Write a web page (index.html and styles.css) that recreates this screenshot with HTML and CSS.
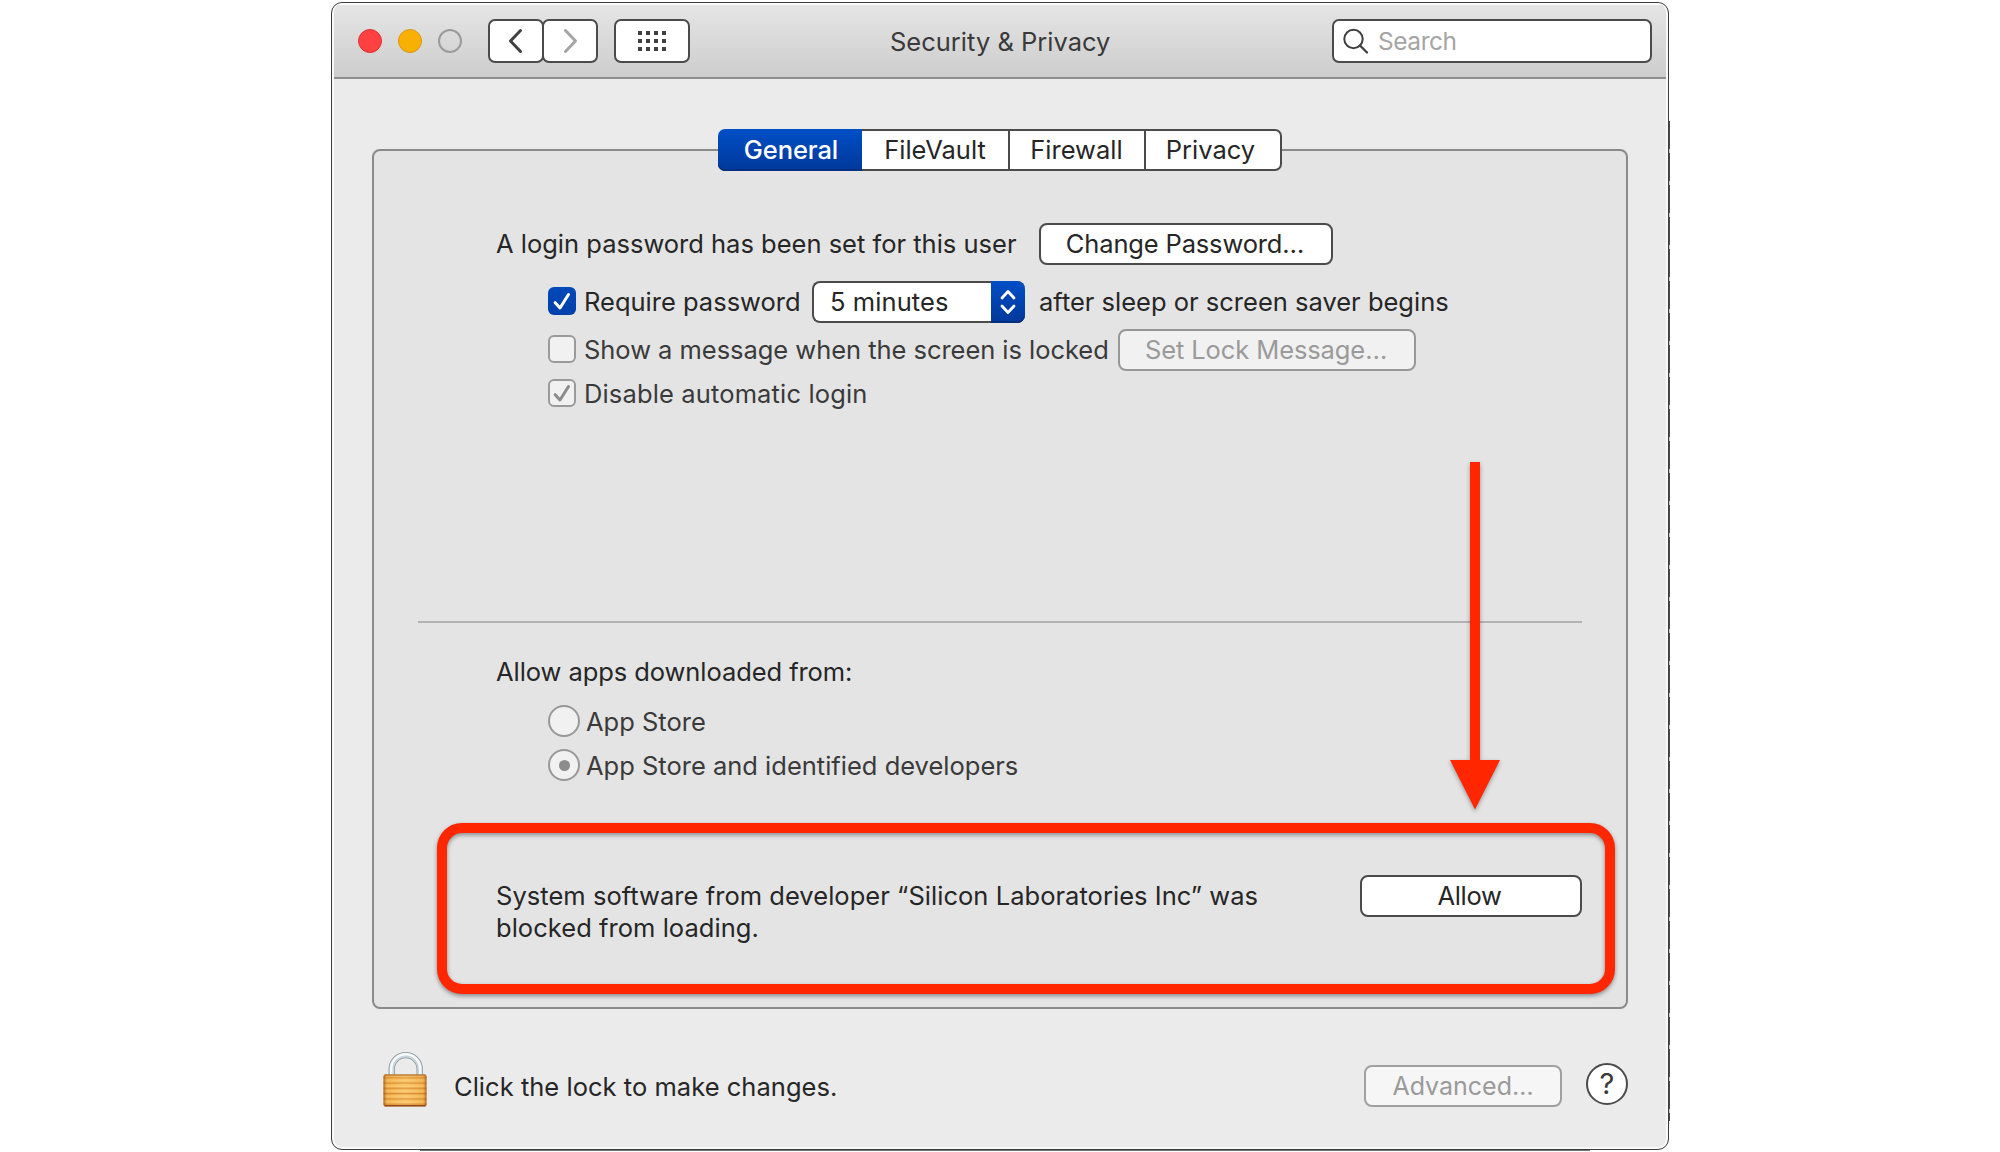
FILE: index.html
```html
<!DOCTYPE html>
<html lang="en">
<head>
<meta charset="utf-8">
<title>Security &amp; Privacy</title>
<link rel="stylesheet" href="styles.css">
</head>
<body>
<main class="window">
  <header class="titlebar">
    <div class="lights"><span class="light close"></span><span class="light minimize"></span><span class="light zoom"></span></div>
    <div class="nav">
      <button class="tool" aria-label="Back"><svg width="16" height="26" viewBox="0 0 16 26"><path d="M12.5 2.5 2.5 13l10 10.5" fill="none" stroke="#404040" stroke-width="3" stroke-linecap="round" stroke-linejoin="round"/></svg></button>
      <button class="tool" aria-label="Forward"><svg width="16" height="26" viewBox="0 0 16 26"><path d="M3.5 2.5 13.5 13l-10 10.5" fill="none" stroke="#a5a5a5" stroke-width="3" stroke-linecap="round" stroke-linejoin="round"/></svg></button>
    </div>
    <button class="tool all" aria-label="Show All"><svg width="28" height="20" viewBox="0 0 28 20"><path d="M0 2h28M0 10h28M0 18h28" fill="none" stroke="#404040" stroke-width="4" stroke-dasharray="4 4"/></svg></button>
    <h1 class="title">Security &amp; Privacy</h1>
    <div class="search">
      <svg width="28" height="28" viewBox="0 0 28 28"><circle cx="11.5" cy="11" r="9.2" fill="none" stroke="#404040" stroke-width="2"/><path d="m18 17.500 7 7" stroke="#404040" stroke-width="2.300" stroke-linecap="round"/></svg>
      <span>Search</span>
    </div>
  </header>

  <section class="panel">
    <nav class="tabs">
      <span class="tab selected">General</span><span class="tab vault">FileVault</span><span class="tab wall">Firewall</span><span class="tab privacy">Privacy</span>
    </nav>

    <div class="login">
      <div class="row">
        <span class="label password-set">A login password has been set for this user</span>
        <button class="button change">Change Password…</button>
      </div>
      <div class="row sub require">
        <span class="check on"><svg width="28" height="28" viewBox="0 0 28 28"><path d="m7.200 15.700 4.800 5.300L20.500 7.500" fill="none" stroke="#fff" stroke-width="3" stroke-linecap="round" stroke-linejoin="round"/></svg></span>
        <span class="label">Require password</span>
        <span class="select"><span class="value">5 minutes</span><span class="stepper"><svg width="18" height="26" viewBox="0 0 18 26"><path d="m3 9 6-6.500L15 9M3 17l6 6.500L15 17" fill="none" stroke="#fff" stroke-width="2.800" stroke-linecap="round" stroke-linejoin="round"/></svg></span></span>
        <span class="after">after sleep or screen saver begins</span>
      </div>
      <div class="row sub message dim">
        <span class="check"></span>
        <span class="label">Show a message when the screen is locked</span>
        <button class="button lock-message off">Set Lock Message…</button>
      </div>
      <div class="row sub auto dim">
        <span class="check"><svg width="24" height="24" viewBox="2 2 24 24"><path d="m7.200 15.700 4.800 5.300L20.500 7.500" fill="none" stroke="#8c8c8c" stroke-width="3" stroke-linecap="round" stroke-linejoin="round"/></svg></span>
        <span class="label">Disable automatic login</span>
      </div>
    </div>

    <hr class="rule">

    <div class="apps">
      <div class="heading">Allow apps downloaded from:</div>
      <div class="row sub choice dim"><span class="radio"></span><span>App Store</span></div>
      <div class="row sub choice dim"><span class="radio picked"></span><span>App Store and identified developers</span></div>
    </div>

    <div class="blocked">
      <p>System software from developer “Silicon Laboratories Inc” was<br>blocked from loading.</p>
      <button class="button allow">Allow</button>
    </div>
  </section>

  <footer class="footer">
    <svg class="lock" width="46" height="60" viewBox="0 0 46 60">
      <defs>
        <linearGradient id="brass" x1="0" x2="0" y1="0" y2="5.300" gradientUnits="userSpaceOnUse" spreadMethod="repeat">
          <stop offset="0" stop-color="#d8862b"/><stop offset=".3" stop-color="#f9bd56"/><stop offset=".7" stop-color="#fcc968"/><stop offset="1" stop-color="#e39a3b"/>
        </linearGradient>
        <linearGradient id="edge" x1="0" x2="1" y1="0" y2="0">
          <stop offset="0" stop-color="#8a4210" stop-opacity=".75"/><stop offset=".08" stop-color="#c87420" stop-opacity=".15"/><stop offset=".5" stop-color="#fff" stop-opacity=".1"/><stop offset=".92" stop-color="#c87420" stop-opacity=".15"/><stop offset="1" stop-color="#8a4210" stop-opacity=".75"/>
        </linearGradient>
      </defs>
      <path d="M9.700 25V18.200a14 14 0 0 1 28 0V25" fill="none" stroke="#8d979d" stroke-width="6.300"/>
      <path d="M9.700 25V18.200a14 14 0 0 1 28 0V25" fill="none" stroke="#c9d5db" stroke-width="4.800"/>
      <path d="M9.200 25V17.800a14.500 14.500 0 0 1 29 0V25" fill="none" stroke="#f5fafc" stroke-width="2.400"/>
      <rect x="1.500" y="23.500" width="43" height="32" rx="2" fill="url(#brass)"/>
      <rect x="1.500" y="23.500" width="43" height="32" rx="2" fill="url(#edge)"/>
      <path d="M2.500 24h41" stroke="#9c5a1d" stroke-width="1.200"/>
      <path d="M2.500 54.800h41" stroke="#8e4a1c" stroke-width="1.600"/>
    </svg>
    <span class="hint">Click the lock to make changes.</span>
    <button class="button advanced off">Advanced…</button>
    <button class="help">?</button>
  </footer>

  <div class="callout"></div>
  <svg class="arrow" width="60" height="360" viewBox="0 0 60 360"><path d="M25 2h10v298h20L30 349.500 5 300h20z" fill="#ff2600"/></svg>
</main>
</body>
</html>
```
FILE: styles.css
```css
* { box-sizing: border-box; }
body {
  margin: 0;
  height: 1152px;
  padding: 2px 0 0 331px;
  background: #fff;
  color: #262626;
  font: 25.5px/30px "Inter", "Liberation Sans", sans-serif;
  overflow: hidden;
}
button { padding: 0; font: inherit; color: inherit; }
svg { display: block; flex: none; }

.window {
  position: relative;
  width: 1338px;
  height: 1148px;
  border: 1px solid #3c3e3e;
  border-radius: 11px;
  background: #ebebeb;
  box-shadow: inset 0 0 0 2px #f8f8f8;
  white-space: nowrap;
}
/* Dark fringe along the outer right and bottom edges */
.window::before,
.window::after { content: ""; position: absolute; }
.window::before {
  left: 1337px;
  top: 118px;
  width: 1px;
  height: 1000px;
  background: repeating-linear-gradient(#4a4c4c 0 28px, #c4c6c6 28px 32px);
}
.window::after {
  left: 88px;
  top: 1147px;
  width: 1170px;
  height: 1px;
  background: #6e746e;
}

.titlebar {
  display: flex;
  height: 76px;
  margin: 0 2px;
  padding: 16px 14px 0 24px;
  border-bottom: 2px solid #8e8e8e;
  border-radius: 9px 9px 0 0;
  background: linear-gradient(#fcfcfc 0 2px, #e5e5e5 2px, #cdcdcd);
}
.lights { display: flex; gap: 16px; padding-top: 10px; width: 130px; }
.light { width: 24px; height: 24px; border-radius: 50%; border: 1px solid; }
.close { background: #ff4141; border-color: #e03236; }
.minimize { background: #f8b005; border-color: #d99812; }
.zoom { border: 2px solid #9b9b9b; }
.nav { display: flex; width: 126px; }
.tool {
  display: flex;
  align-items: center;
  justify-content: center;
  width: 56px;
  height: 44px;
  border: 2px solid #4b4b4b;
  border-radius: 7px;
  background: #fff;
}
.tool + .tool { margin-left: -2px; }
.all { width: 76px; }
.title { margin: 8px 0 0 200px; width: 442px; font: inherit; color: #3a3a3a; }
.search {
  display: flex;
  width: 320px;
  height: 44px;
  padding: 7px 6px 7px 8px;
  border: 2px solid #4b4b4b;
  border-radius: 7px;
  background: #fff;
}
.search span { margin: -2px 0 0 8px; font-size: 24.5px; letter-spacing: -.45px; color: #a5a5a5; }

.panel {
  height: 860px;
  margin: 70px 40px 0;
  padding: 0 44px;
  border: 2px solid #8a8a8a;
  border-radius: 8px;
  background: #e4e4e4;
}
.tabs { display: flex; width: 564px; height: 42px; margin: -22px auto 0; }
.tab {
  padding-top: 4px;
  border: 2px solid #4b4b4b;
  border-left: 0;
  background: #fff;
  text-align: center;
}
.selected {
  width: 144px;
  padding: 6px 0 0 2px;
  border: 0;
  border-radius: 7px 0 0 7px;
  background: linear-gradient(#004fc6, #00389a);
  box-shadow: inset 0 -2px 0 #00307f;
  color: #fff;
  font-weight: 500;
  letter-spacing: -.1px;
}
.vault { width: 148px; }
.wall { width: 136px; padding-right: 1px; }
.privacy { width: 136px; padding-right: 5px; border-radius: 0 7px 7px 0; }

.login { height: 450px; padding: 52px 0 0 78px; }
.row { display: flex; align-items: center; height: 42px; }
.sub { margin-left: 52px; }
.dim { color: #3a3a3a; }
.password-set { width: 543px; }
.button {
  height: 42px;
  padding: 0 0 1px;
  border: 2px solid #4b4b4b;
  border-radius: 8px;
  background: #fff;
  color: #262626;
  text-align: center;
}
.button.off { border-color: #979797; background: #f1f1f1; color: #9a9a9a; }
.change { width: 294px; padding-right: 2px; letter-spacing: -.16px; }
.check {
  width: 28px;
  height: 28px;
  flex: none;
  border: 2px solid #9a9a9a;
  border-radius: 6px;
  background: #f1f1f1;
}
.check.on { border: 0; background: linear-gradient(#0049b9, #0041ab); }
.require { margin-top: 16px; }
.require .check, .message .check { margin-top: -2px; }
.sub .label { margin-left: 8px; width: 228px; }
.select {
  display: flex;
  width: 213px;
  height: 42px;
  border: 2px solid #4b4b4b;
  border-right: 0;
  border-radius: 8px;
  background: #fff;
}
.value { width: 177px; padding: 4px 0 0 16px; letter-spacing: .09px; }
.stepper {
  display: flex;
  align-items: center;
  justify-content: center;
  width: 34px;
  height: 42px;
  margin-top: -2px;
  border-radius: 0 8px 8px 0;
  background: linear-gradient(#004fc6, #00389a);
  box-shadow: inset 0 -2px 0 #00307f;
}
.after { margin-left: 14px; }
.message { margin-top: 6px; }
.message .label { width: 534px; letter-spacing: -.04px; }
.lock-message { width: 298px; padding-right: 2px; letter-spacing: -.1px; }
.auto { height: 28px; margin-top: 8px; }
.auto .label { padding-top: 1px; letter-spacing: .14px; }

.rule { height: 2px; margin: 0; border: 0; background: #b3b3b3; }
.apps { height: 252px; padding: 34px 0 0 78px; }
.heading { height: 48px; letter-spacing: -.07px; }
.choice { height: 32px; margin-bottom: 12px; gap: 6px; }
.radio {
  display: flex;
  align-items: center;
  justify-content: center;
  width: 32px;
  height: 32px;
  border: 2px solid #989898;
  border-radius: 50%;
  background: #f1f1f1;
}
.picked::after { content: ""; width: 11px; height: 11px; border-radius: 50%; background: #8c8c8c; }
.choice span + span { padding-top: 1px; }
.blocked { display: flex; justify-content: space-between; padding-left: 78px; }
.blocked p { margin: 5px 0 0; line-height: 32px; letter-spacing: .04px; }
.allow { width: 222px; padding-right: 3px; letter-spacing: -.3px; }

.footer { display: flex; padding: 54px 40px 0 50px; }
.lock { margin-top: -12px; }
.hint { width: 910px; margin: 9px 0 0 26px; letter-spacing: .03px; }
.advanced { width: 198px; margin-top: 2px; font-size: 25px; }
.button.advanced { border-color: #a0a0a0; background: #f6f6f6; }
.help {
  width: 42px;
  height: 42px;
  margin-left: 24px;
  border: 2px solid #4b4b4b;
  border-radius: 50%;
  background: #fff;
  color: #3a3a3a;
  font-size: 29px;
}

/* Annotation layer over the window */
.callout {
  position: absolute;
  left: 105px;
  top: 820px;
  width: 1178px;
  height: 171px;
  border: 10px solid #ff2600;
  border-radius: 25px;
  filter: drop-shadow(0 2px 2px rgba(0, 0, 0, .4));
}
.arrow {
  position: absolute;
  left: 1113px;
  top: 457px;
  filter: drop-shadow(0 2px 2px rgba(0, 0, 0, .35));
}
```
